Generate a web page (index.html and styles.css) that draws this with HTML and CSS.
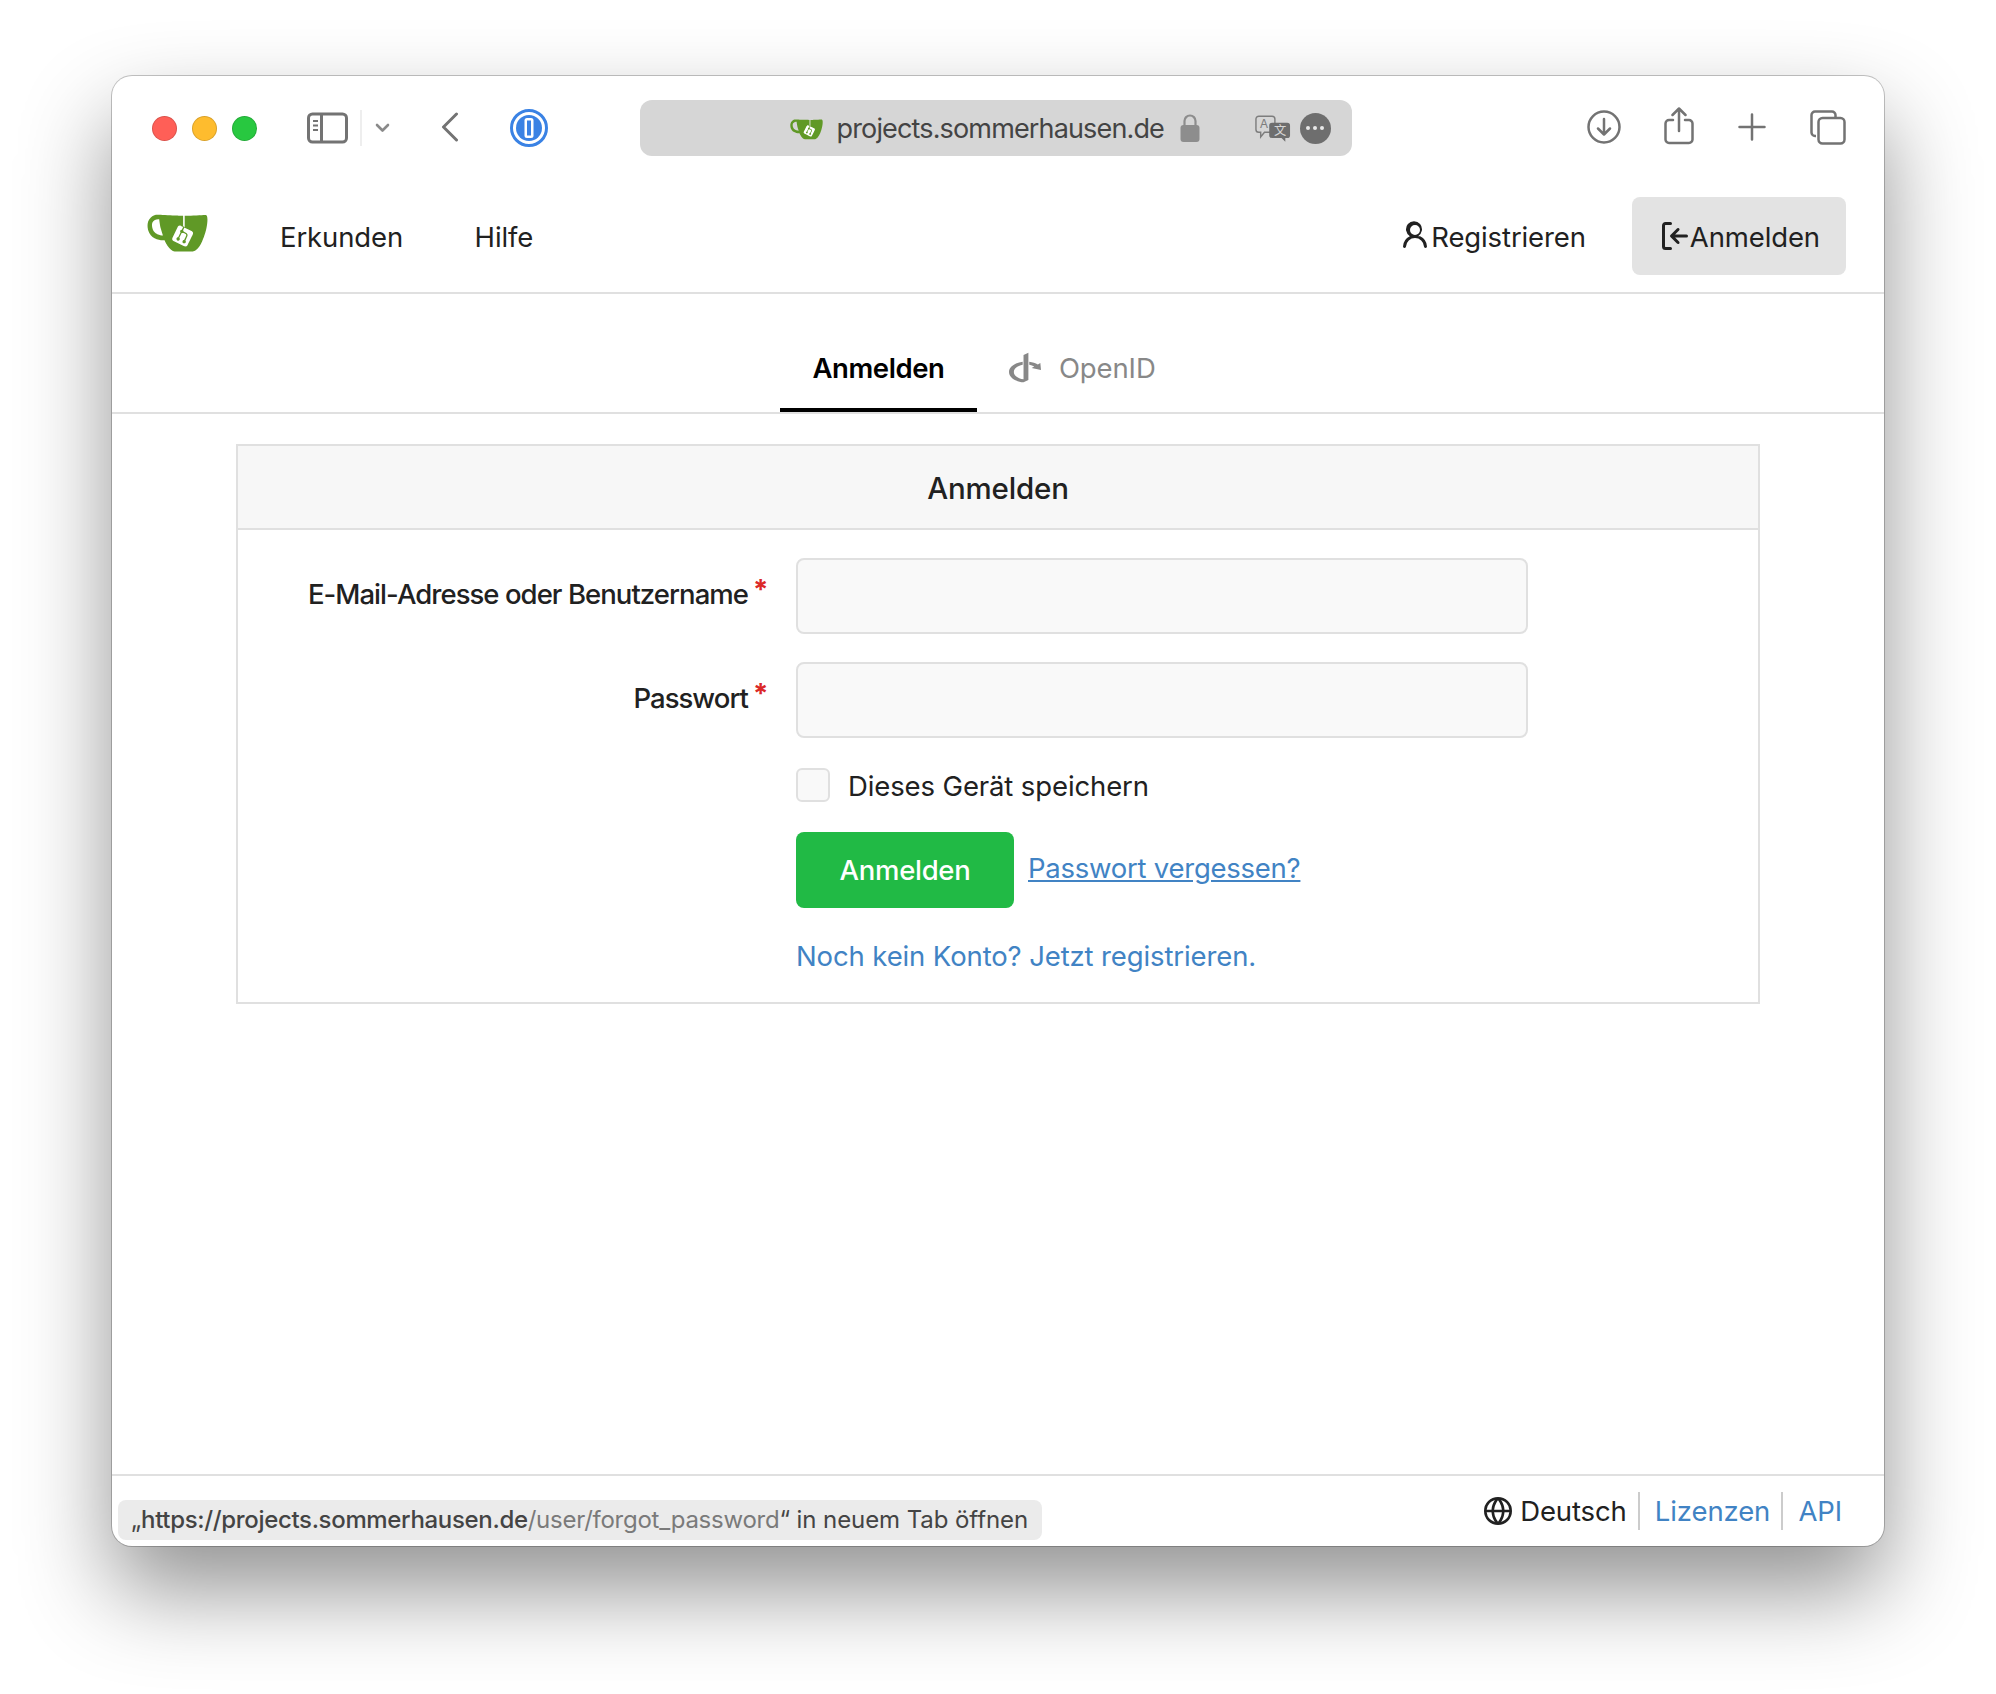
FILE: index.html
```html
<!DOCTYPE html>
<html lang="de">
<head>
<meta charset="utf-8">
<title>Anmelden</title>
<link rel="stylesheet" href="styles.css">
</head>
<body>
<svg class="defs" width="0" height="0" aria-hidden="true">
  <symbol id="gitea" viewBox="0 0 640 640">
    <path fill="#fff" d="m395.9 484.2-126.9-61c-12.5-6-17.9-21.2-11.8-33.8l61-126.9c6-12.5 21.2-17.9 33.8-11.8 17.2 8.3 27.1 13 27.1 13l-.1-109.2 16.7-.1.1 117.1s57.4 24.2 83.1 40.1c3.7 2.3 10.2 6.8 12.9 14.4 2.1 6.1 2 13.1-1 19.3l-61 126.9c-6.2 12.7-21.4 18.1-33.9 12"/>
    <path fill="#609926" d="M622.7 149.8c-4.1-4.1-9.6-4-9.6-4s-117.2 6.6-177.9 8c-13.3.3-26.5.6-39.6.7v117.2c-5.5-2.6-11.1-5.3-16.6-7.9 0-36.4-.1-109.2-.1-109.2-29 .4-89.2-2.2-89.2-2.2s-141.4-7.1-156.8-8.5c-9.8-.6-22.5-2.1-39 1.5-8.7 1.8-33.5 7.4-53.8 26.9C-4.9 212.4 6.6 276.2 8 285.8c1.7 11.7 6.9 44.2 31.7 72.5 45.8 56.1 144.4 54.8 144.4 54.8s12.1 28.9 30.6 55.5c25 33.1 50.7 58.9 75.7 62 63 0 188.9-.1 188.9-.1s12 .1 28.3-10.3c14-8.5 26.5-23.4 26.5-23.4S547 483 565 451.5c5.5-9.7 10.1-19.1 14.1-28 0 0 55.2-117.1 55.2-231.1-1.1-34.5-9.6-40.6-11.6-42.6M125.6 353.9c-25.9-8.5-36.9-18.7-36.9-18.7S69.6 321.8 60 295.4c-16.5-44.2-1.4-71.2-1.4-71.2s8.4-22.5 38.5-30c13.8-3.7 31-3.1 31-3.1s7.1 59.4 15.7 94.2c7.2 29.2 24.8 77.7 24.8 77.7s-26.1-3.1-43-9.1m300.3 107.6s-6.1 14.5-19.6 15.4c-5.8.4-10.3-1.2-10.3-1.2s-.3-.1-5.3-2.1l-112.9-55s-10.9-5.7-12.8-15.6c-2.2-8.1 2.7-18.1 2.7-18.1L322 273s4.8-9.7 12.2-13c.6-.3 2.3-1 4.5-1.5 8.1-2.1 18 2.8 18 2.8L467.4 315s12.6 5.7 15.3 16.2c1.9 7.4-.5 14-1.8 17.2-6.3 15.4-55 113.1-55 113.1"/>
    <path fill="#609926" d="M326.8 380.1c-8.2.1-15.4 5.8-17.3 13.8s2 16.3 9.1 20c7.7 4 17.5 1.8 22.7-5.4 5.1-7.1 4.3-16.9-1.8-23.1l24-49.1c1.5.1 3.7.2 6.2-.5 4.1-.9 7.1-3.6 7.1-3.6 4.2 1.8 8.6 3.8 13.2 6.1 4.8 2.4 9.3 4.9 13.4 7.3.9.5 1.8 1.1 2.8 1.9 1.6 1.3 3.4 3.1 4.7 5.5 1.9 5.5-1.9 14.9-1.9 14.9-2.3 7.6-18.4 40.6-18.4 40.6-8.1-.2-15.3 5-17.7 12.5-2.6 8.1 1.1 17.3 8.9 21.3s17.4 1.7 22.5-5.3c5-6.8 4.6-16.3-1.1-22.6 1.9-3.7 3.7-7.4 5.6-11.3 5-10.4 13.5-30.4 13.5-30.4.9-1.7 5.7-10.3 2.7-21.3-2.5-11.4-12.6-16.7-12.6-16.7-12.2-7.9-29.2-15.2-29.2-15.2s0-4.1-1.1-7.1c-1.1-3.1-2.8-5.1-3.9-6.3 4.7-9.7 9.4-19.3 14.1-29-4.1-2-8.1-4-12.2-6.1-4.8 9.8-9.7 19.7-14.5 29.5-6.7-.1-12.9 3.5-16.1 9.4-3.4 6.3-2.7 14.1 1.9 19.8z"/>
  </symbol>
</svg>
<div class="window">
  <header class="titlebar">
    <div class="lights">
      <span class="light red"></span>
      <span class="light yellow"></span>
      <span class="light green"></span>
    </div>
    <svg class="ic-sidebar" width="41" height="32" viewBox="0 0 41 32" fill="none" stroke="#737373">
      <rect x="1.5" y="2" width="38" height="28" rx="4" stroke-width="3"/>
      <path d="M14.5 2v28" stroke-width="3"/>
      <path d="M6 9h5M6 13.5h5M6 18h5" stroke-width="2"/>
    </svg>
    <span class="tb-sep"></span>
    <svg class="ic-chev" width="15" height="10" viewBox="0 0 15 10" fill="none" stroke="#8a8a8a" stroke-width="2.6" stroke-linecap="round" stroke-linejoin="round">
      <path d="M2 2l5.500 5.500L13 2"/>
    </svg>
    <svg class="ic-back" width="18" height="30" viewBox="0 0 18 30" fill="none" stroke="#737373" stroke-width="3" stroke-linecap="round" stroke-linejoin="round">
      <path d="M15.500 2L2.500 15l13 13"/>
    </svg>
    <svg class="ic-onepass" width="38" height="38" viewBox="0 0 38 38">
      <circle cx="19" cy="19" r="17.500" fill="none" stroke="#3a82e4" stroke-width="3"/>
      <circle cx="19" cy="19" r="13" fill="#3a82e4"/>
      <rect x="14.500" y="9" width="9" height="20" rx="2.500" fill="#fff"/>
      <rect x="17" y="11.500" width="4" height="15" fill="#3a82e4"/>
    </svg>
    <div class="addressbar">
      <svg class="fav" width="33" height="33"><use href="#gitea"/></svg>
      <span class="host">projects.sommerhausen.de</span>
      <svg class="ic-lock" width="20" height="28" viewBox="0 0 20 28">
        <path d="M4.500 12V7a5.500 5.500 0 0 1 11 0v5" fill="none" stroke="#8d8d8d" stroke-width="2.200"/>
        <rect x="0.500" y="11" width="19" height="17" rx="3" fill="#8d8d8d"/>
      </svg>
      <svg class="ic-translate" width="36" height="27" viewBox="0 0 38 28">
        <path d="M4 1h14a3 3 0 0 1 3 3v11a3 3 0 0 1-3 3H10l-4 5v-5H4a3 3 0 0 1-3-3V4a3 3 0 0 1 3-3z" fill="#d6d6d6" stroke="#7d7d7d" stroke-width="1.500"/>
        <text class="tr-a" x="5" y="14">A</text>
        <path d="M18 8h16a3 3 0 0 1 3 3v10a3 3 0 0 1-3 3h-2v4l-4-4h-10a3 3 0 0 1-3-3V11a3 3 0 0 1 3-3z" fill="#6e6e6e"/>
        <text class="tr-x" x="20" y="21">文</text>
      </svg>
      <span class="more"><i></i><i></i><i></i></span>
    </div>
    <div class="tb-right">
      <svg width="34" height="34" viewBox="0 0 34 34" fill="none" stroke="#737373" stroke-width="2.500" stroke-linecap="round" stroke-linejoin="round">
        <circle cx="17" cy="17" r="15.500"/>
        <path d="M17 9v15M11 18.500l6 6 6-6"/>
      </svg>
      <svg class="ic-share" width="30" height="38" viewBox="0 0 30 38" fill="none" stroke="#737373" stroke-width="2.500" stroke-linecap="round" stroke-linejoin="round">
        <path d="M9 13H5a3.500 3.500 0 0 0-3.500 3.500v16A3.500 3.500 0 0 0 5 36h20a3.500 3.500 0 0 0 3.500-3.500v-16A3.500 3.500 0 0 0 25 13h-4"/>
        <path d="M15 24V2M8.500 8L15 1.500 21.500 8"/>
      </svg>
      <svg class="ic-plus" width="28" height="28" viewBox="0 0 28 28" fill="none" stroke="#737373" stroke-width="2.500" stroke-linecap="round">
        <path d="M14 1.500v25M1.500 14h25"/>
      </svg>
      <svg class="ic-tabs" width="36" height="35" viewBox="0 0 36 35" fill="none" stroke="#737373" stroke-width="2.500">
        <path d="M6 26H5a3.500 3.500 0 0 1-3.500-3.500V5A3.500 3.500 0 0 1 5 1.500h17A3.500 3.500 0 0 1 25.500 5v2"/>
        <rect x="8.500" y="8" width="26" height="25.500" rx="4"/>
      </svg>
    </div>
  </header>

  <nav class="topnav">
    <svg class="logo" width="61" height="61"><use href="#gitea"/></svg>
    <a class="nav-link erkunden">Erkunden</a>
    <a class="nav-link hilfe">Hilfe</a>
    <div class="nav-right">
      <a class="nav-item">
        <svg width="32" height="32" viewBox="0 0 16 16" fill="#212121"><path d="M10.561 8.073a6.005 6.005 0 0 1 3.432 5.142.75.75 0 1 1-1.498.07 4.5 4.5 0 0 0-8.99 0 .75.75 0 0 1-1.498-.07 6.004 6.004 0 0 1 3.431-5.142 3.999 3.999 0 1 1 4.123 0ZM10.500 5a2.500 2.500 0 1 0-5 0 2.500 2.500 0 0 0 5 0Z"/></svg>
        <span>Registrieren</span>
      </a>
      <a class="nav-item active">
        <svg width="32" height="32" viewBox="0 0 16 16" fill="#212121"><path d="M2 2.750C2 1.784 2.784 1 3.750 1h2.500a.75.75 0 0 1 0 1.500h-2.500a.25.25 0 0 0-.25.25v10.500c0 .138.112.25.25.25h2.500a.75.75 0 0 1 0 1.500h-2.500A1.750 1.750 0 0 1 2 13.250Zm6.560 4.500h5.690a.75.75 0 0 1 0 1.500H8.560l1.970 1.970a.749.749 0 0 1-.326 1.275.749.749 0 0 1-.734-.215L6.220 8.530a.75.75 0 0 1 0-1.060l3.250-3.250a.749.749 0 0 1 1.275.326.749.749 0 0 1-.215.734Z"/></svg>
        <span>Anmelden</span>
      </a>
    </div>
  </nav>

  <div class="tabs">
    <a class="tab active">Anmelden</a>
    <a class="tab">
      <svg width="32" height="37" viewBox="0 0 448 512" fill="#888"><path d="M271.500 432l-68 32C88.500 453.700 0 392.500 0 318.200c0-71.500 82.500-131 191.700-144.200v43c-71.500 12.500-124 53-124 101.200 0 51 58.500 93.300 135.700 103v-340l68-33.200v384zM448 291l-131.300-28.500 36.800-20.700c-19.500-11.500-43.500-20-70-24.800v-43c46.200 5.500 87.700 19.500 120.300 39.300l35-19.800L448 291z"/></svg>
      <span>OpenID</span>
    </a>
  </div>

  <main class="card">
    <h4 class="card-head">Anmelden</h4>
    <form class="card-body">
      <div class="row">
        <label class="label">E-Mail-Adresse oder Benutzername<span class="req">*</span></label>
        <input class="input" type="text">
      </div>
      <div class="row">
        <label class="label">Passwort<span class="req">*</span></label>
        <input class="input" type="password">
      </div>
      <div class="row-offset check-row">
        <span class="checkbox"></span>
        <span class="check-text">Dieses Gerät speichern</span>
      </div>
      <div class="row-offset action-row">
        <button class="submit" type="button">Anmelden</button>
        <a class="forgot">Passwort vergessen?</a>
      </div>
      <div class="row-offset signup-row"><a class="link">Noch kein Konto? Jetzt registrieren.</a></div>
    </form>
  </main>

  <div class="spacer"></div>

  <footer class="footer">
    <span class="lang">
      <svg width="28" height="28" viewBox="0 0 16 16" fill="#212121"><path d="M8 0a8 8 0 1 1 0 16A8 8 0 0 1 8 0ZM5.780 8.750a9.640 9.640 0 0 0 1.363 4.177c.255.426.542.832.857 1.215.245-.296.551-.705.857-1.215A9.640 9.640 0 0 0 10.220 8.750Zm4.440-1.500a9.640 9.640 0 0 0-1.363-4.177c-.307-.510-.612-.919-.857-1.215a9.927 9.927 0 0 0-.857 1.215A9.640 9.640 0 0 0 5.780 7.250Zm-5.944 1.500H1.543a6.507 6.507 0 0 0 4.666 5.500c-.123-.181-.24-.365-.352-.552-.715-1.192-1.437-2.874-1.581-4.948Zm-2.733-1.500h2.733c.144-2.074.866-3.756 1.580-4.948.12-.197.237-.381.353-.552a6.507 6.507 0 0 0-4.666 5.500Zm10.181 1.500c-.144 2.074-.866 3.756-1.580 4.948-.12.197-.237.381-.353.552a6.507 6.507 0 0 0 4.666-5.500Zm2.733-1.500a6.507 6.507 0 0 0-4.666-5.500c.123.181.24.365.353.552.714 1.192 1.436 2.874 1.580 4.948Z"/></svg>
      <span>Deutsch</span>
    </span>
    <a class="foot-link">Lizenzen</a>
    <a class="foot-link">API</a>
  </footer>

  <div class="status">„<b>https://projects.sommerhausen.de</b><span class="path">/user/forgot_password</span>“ in neuem Tab öffnen</div>
</div>
</body>
</html>
```
FILE: styles.css
```css
* { box-sizing: border-box; }
html, body { margin: 0; padding: 0; background: #fff; }
body {
  height: 1694px;
  overflow: hidden;
  padding: 76px 0 0 112px;
  font-family: "Inter", "Liberation Sans", sans-serif;
  font-size: 27.5px;
  letter-spacing: -0.12px;
  line-height: 36px;
  color: #212121;
}
.defs { position: absolute; }
.window {
  position: relative;
  width: 1772px;
  height: 1470px;
  background: #fff;
  border-radius: 20px;
  box-shadow: 0 0 0 1px rgba(0,0,0,.22), 0 44px 90px rgba(0,0,0,.43);
  display: flex;
  flex-direction: column;
}
svg { display: block; flex: none; }

/* browser chrome */
.titlebar { height: 104px; flex: none; display: flex; align-items: center; padding: 0 38px 0 39px; }
.lights { display: flex; gap: 15px; margin-left: 0.5px; }
.light { width: 25px; height: 25px; border-radius: 50%; border: 1px solid rgba(0,0,0,.14); }
.red { background: #ff5f57; }
.yellow { background: #febc2e; }
.green { background: #28c840; }
.ic-sidebar { margin-left: 50px; margin-bottom: 1px; }
.tb-sep { width: 2px; height: 36px; background: #eee; margin-left: 12px; }
.ic-chev { margin-left: 13px; }
.ic-back { margin-left: 51px; margin-bottom: 2px; }
.ic-onepass { margin-left: 51.5px; }
.addressbar {
  width: 712px;
  height: 56px;
  margin-left: 91.5px;
  background: #d6d6d6;
  border-radius: 12px;
  display: flex;
  align-items: center;
  padding-left: 150px;
  color: #444;
}
.fav { margin-right: 14px; }
.host { width: 327px; white-space: nowrap; font-size: 27px; letter-spacing: -0.85px; padding-top: 2px; }
.ic-lock { margin-left: 16px; }
.ic-translate { margin-left: 55px; }
.tr-a { font-size: 13px; fill: #7d7d7d; letter-spacing: 0; }
.tr-x { font-family: "Noto Sans CJK SC", sans-serif; font-size: 13px; fill: #d6d6d6; letter-spacing: 0; }
.more { width: 31px; height: 31px; border-radius: 50%; background: #6e6e6e; margin-left: 9px; display: flex; align-items: center; justify-content: center; gap: 2.5px; }
.more i { width: 4.500px; height: 4.500px; border-radius: 50%; background: #e8e8e8; }
.tb-right { margin-left: auto; margin-bottom: 2px; display: flex; align-items: center; }
.ic-share { margin-left: 43px; margin-top: -3px; }
.ic-plus { margin-left: 44px; }
.ic-tabs { margin-left: 44px; }

/* site nav */
.topnav {
  height: 114px;
  flex: none;
  display: flex;
  align-items: center;
  padding: 0 38px 1px 35px;
  border-bottom: 2px solid #e0e0e0;
}
.logo { margin-bottom: 9px; }
.nav-link { padding-top: 2px; }
.erkunden { margin-left: 72px; }
.hilfe { margin-left: 71.5px; }
.nav-right { margin-left: auto; display: flex; align-items: center; gap: 46px; }
.nav-item { display: flex; align-items: center; }
.nav-item span { padding-top: 2px; }
.nav-item.active { height: 78px; padding: 0 26px; background: #e3e3e3; border-radius: 8px; }

/* tabs */
.tabs { flex: none; display: flex; padding-left: 668px; border-bottom: 2px solid #e0e0e0; height: 120px; }
.tab { display: flex; align-items: center; gap: 18px; height: 118px; padding: 56px 32px 22px; border-bottom: 4px solid transparent; color: #888; }
.tab.active { color: #000; font-weight: 600; letter-spacing: -0.42px; padding: 56px 32.5px 22px; border-bottom-color: #000; }
.tab svg { margin-top: -2px; }

/* card */
.card { flex: none; margin: 30px 124px 0; border: 2px solid #e0e0e0; }
.card-head { margin: 0; height: 84px; background: #f7f7f7; border-bottom: 2px solid #e0e0e0; display: flex; align-items: center; justify-content: center; font-size: 29.5px; font-weight: 500; letter-spacing: -0.15px; padding-top: 1px; }
.card-body { padding: 28px 0 28px; display: flex; flex-direction: column; }
.row { display: flex; align-items: center; margin-bottom: 28px; }
.label { width: 529px; margin-right: 29px; text-align: right; font-weight: 500; letter-spacing: -0.95px; padding-bottom: 4px; padding-right: 19px; position: relative; white-space: nowrap; }
.req { position: absolute; right: 1px; top: -5px; color: #db2828; font-weight: 700; line-height: 36px; width: 13px; text-align: center; letter-spacing: 0; }
.input { width: 732px; height: 76px; background: #f9f9f9; border: 2px solid #e0e0e0; border-radius: 8px; padding: 0; display: block; outline: none; }
.row-offset { margin-left: 558px; display: flex; align-items: center; }
.check-row { margin-top: 2px; height: 34px; gap: 18px; }
.check-text { padding-top: 2px; }
.checkbox { width: 34px; height: 34px; background: #f9f9f9; border: 2px solid #e0e0e0; border-radius: 6px; }
.action-row { margin-top: 30px; gap: 14px; }
.submit { width: 218px; height: 76px; background: #21ba45; color: #fff; border: 0; border-radius: 8px; padding: 0; font: inherit; font-weight: 500; letter-spacing: -0.3px; }
.forgot { color: #4183c4; text-decoration: underline; letter-spacing: -0.25px; padding-bottom: 4px; }
.signup-row { margin-top: 30px; }
.link { color: #4183c4; }

.spacer { flex: 1; }

/* footer */
.footer { flex: none; height: 72px; border-top: 2px solid #e0e0e0; display: flex; align-items: center; justify-content: flex-end; padding: 0 42px 0 0; }
.lang { display: flex; align-items: center; gap: 8px; }
.foot-link { color: #4183c4; margin-left: 11px; padding-left: 15.2px; border-left: 2px solid #ccc; height: 38px; display: flex; align-items: center; }

/* status bubble */
.status {
  position: absolute;
  left: 6px;
  bottom: 6px;
  height: 40px;
  padding: 0 14px 0 13px;
  background: #ebebeb;
  border-radius: 8px;
  font-size: 24px;
  line-height: 40px;
  letter-spacing: -0.08px;
  color: #444;
  white-space: nowrap;
}
.status b { font-weight: 500; letter-spacing: -0.33px; }
.status .path { color: #7a7a7a; letter-spacing: -0.25px; }
```
